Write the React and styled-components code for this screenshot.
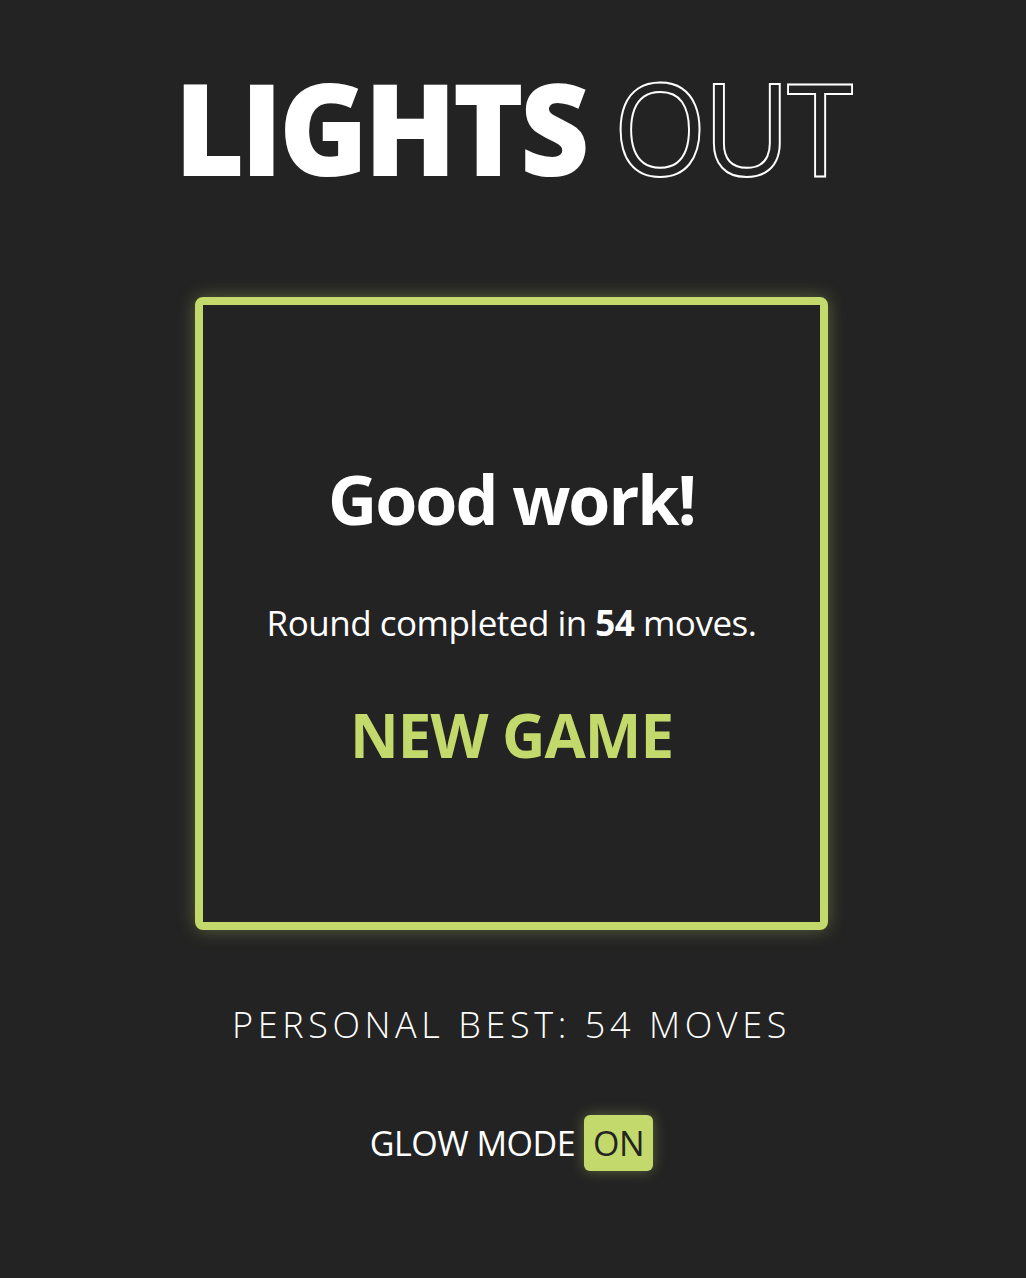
import styled, { createGlobalStyle } from "styled-components"

const GlobalStyle = createGlobalStyle`
  html, body {
    margin: 0;
    background: #232323;
  }
  body {
    font-family: "Open Sans", "Noto Sans", sans-serif;
    color: #ffffff;
  }
`

const LIME = "#c3d96b"

function App() {
  return (
    <Page>
      <GlobalStyle />
      <Title>
        <Solid>LIGHTS</Solid> <Outline>OUT</Outline>
      </Title>
      <Board>
        <Heading>Good work!</Heading>
        <Message>
          Round completed in <strong>54</strong> moves.
        </Message>
        <NewGame>NEW GAME</NewGame>
      </Board>
      <Best>PERSONAL BEST: 54 MOVES</Best>
      <GlowToggle>
        GLOW MODE <Badge>ON</Badge>
      </GlowToggle>
    </Page>
  )
}

export default App

const Page = styled.div`
display: flex;
flex-direction: column;
align-items: center;
min-height: 1278px;
padding: 62px 3px 0 0;
box-sizing: border-box;
`

const Title = styled.h1`
margin: 0;
font-size: 128px;
line-height: 130px;
letter-spacing: -4px;
white-space: nowrap;
transform: scaleX(0.94);
`

const Solid = styled.span`
font-weight: 800;
`

const Outline = styled.span`
font-weight: 400;
color: transparent;
-webkit-text-stroke: 2px #ffffff;
`

const Board = styled.div`
margin-top: 105px;
width: 633px;
height: 633px;
box-sizing: border-box;
padding-top: 154px;
border: 8px solid ${LIME};
border-radius: 8px;
box-shadow: 0 0 18px rgba(195, 217, 107, 0.35);
display: flex;
flex-direction: column;
align-items: center;
`

const Heading = styled.h2`
margin: 0;
font-size: 68px;
font-weight: 700;
letter-spacing: -2px;
line-height: 80px;
`

const Message = styled.p`
margin: 64px 0 0;
font-size: 35px;
line-height: 40px;
letter-spacing: -0.5px;
> strong {
  font-weight: 700;
}
`

const NewGame = styled.button`
margin-top: 57px;
background: none;
border: none;
padding: 0;
cursor: pointer;
font-family: inherit;
font-size: 60px;
font-weight: 700;
line-height: 70px;
letter-spacing: -1px;
color: ${LIME};
`

const Best = styled.div`
margin-top: 71px;
font-size: 36px;
font-weight: 300;
letter-spacing: 4.6px;
line-height: 48px;
`

const GlowToggle = styled.div`
margin-top: 66px;
display: flex;
align-items: center;
gap: 9px;
font-size: 34px;
line-height: 56px;
letter-spacing: -0.5px;
`

const Badge = styled.span`
display: inline-flex;
align-items: center;
height: 56px;
padding: 0 9px;
border-radius: 6px;
background: ${LIME};
color: #232323;
box-shadow: 0 0 14px rgba(195, 217, 107, 0.35);
`
